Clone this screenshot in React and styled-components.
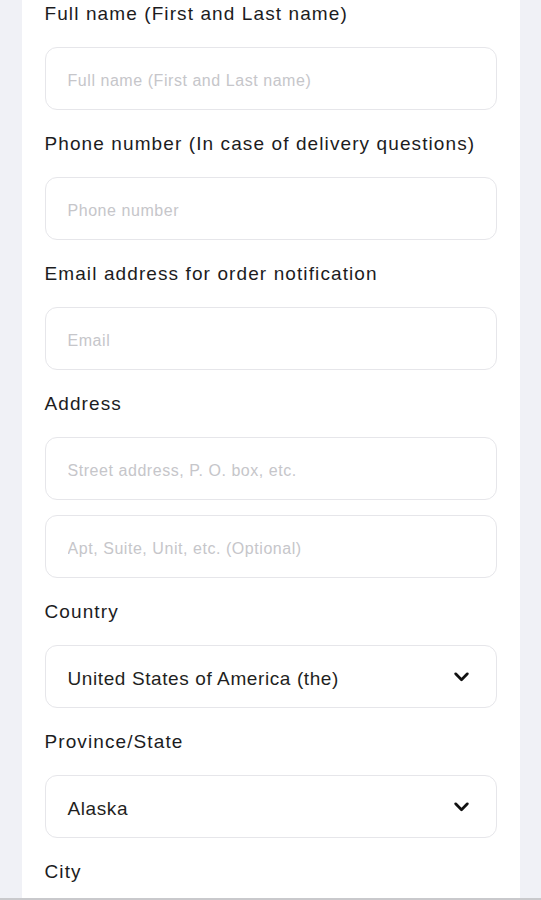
import React from "react"
import styled, { createGlobalStyle } from "styled-components"

const GlobalStyle = createGlobalStyle`
  html, body {
    margin: 0;
    padding: 0;
    background: #f0f1f6;
    font-family: "Liberation Sans", Arial, sans-serif;
  }
`

const Page = styled.div`
  display: flex;
  justify-content: center;
  padding: 0 21px;
  min-height: 900px;
`

const Card = styled.form`
  width: 498px;
  background: #ffffff;
  padding: 1px 23px 40px;
  box-sizing: border-box;
  display: flex;
  flex-direction: column;
`

const Field = styled.div`
  display: flex;
  flex-direction: column;
  gap: ${({ $gap }) => $gap || 15}px;
  margin-top: ${({ $first }) => ($first ? 0 : 21)}px;
`

const Label = styled.label`
  font-size: 19px;
  line-height: 26px;
  color: #1c1c1e;
  letter-spacing: 1.1px;
  margin-bottom: 5px;
  white-space: nowrap;
`

const Box = styled.div`
  position: relative;
  height: 63px;
  border: 1px solid #e6e6ea;
  border-radius: 12px;
  box-sizing: border-box;
  display: flex;
  align-items: center;
  padding: 4px 22px 0;
  background: #fff;
`

const Input = styled.input`
  border: none;
  outline: none;
  width: 100%;
  font-family: inherit;
  font-size: 16px;
  letter-spacing: 0.55px;
  color: #222;
  background: transparent;
  padding: 0;
  &::placeholder {
    color: #c6c6ca;
  }
`

const SelectText = styled.span`
  flex: 1;
  font-size: 19px;
  letter-spacing: 0.6px;
  color: #1f1f22;
`

const Chevron = styled.svg`
  width: 17px;
  height: 17px;
  margin: -4px 4px 0 0;
`

const BottomEdge = styled.div`
  position: fixed;
  left: 0;
  right: 0;
  bottom: 0;
  height: 2px;
  background: #c9c9cc;
`

const TextField = ({ placeholder }) => (
  <Box>
    <Input placeholder={placeholder} />
  </Box>
)

const SelectField = ({ value }) => (
  <Box>
    <SelectText>{value}</SelectText>
    <Chevron viewBox="0 0 16 16">
      <path
        d="M2.5 5.5 L8 11 L13.5 5.5"
        fill="none"
        stroke="#111"
        strokeWidth="2.6"
        strokeLinecap="round"
        strokeLinejoin="round"
      />
    </Chevron>
  </Box>
)

export default function App() {
  return (
    <>
      <GlobalStyle />
      <Page>
        <Card>
          <Field $first>
            <Label>Full name (First and Last name)</Label>
            <TextField placeholder="Full name (First and Last name)" />
          </Field>
          <Field>
            <Label>Phone number (In case of delivery questions)</Label>
            <TextField placeholder="Phone number" />
          </Field>
          <Field>
            <Label>Email address for order notification</Label>
            <TextField placeholder="Email" />
          </Field>
          <Field>
            <Label>Address</Label>
            <TextField placeholder="Street address, P. O. box, etc." />
            <TextField placeholder="Apt, Suite, Unit, etc. (Optional)" />
          </Field>
          <Field>
            <Label>Country</Label>
            <SelectField value="United States of America (the)" />
          </Field>
          <Field>
            <Label>Province/State</Label>
            <SelectField value="Alaska" />
          </Field>
          <Field>
            <Label>City</Label>
            <TextField placeholder="City" />
          </Field>
        </Card>
      </Page>
      <BottomEdge />
    </>
  )
}
